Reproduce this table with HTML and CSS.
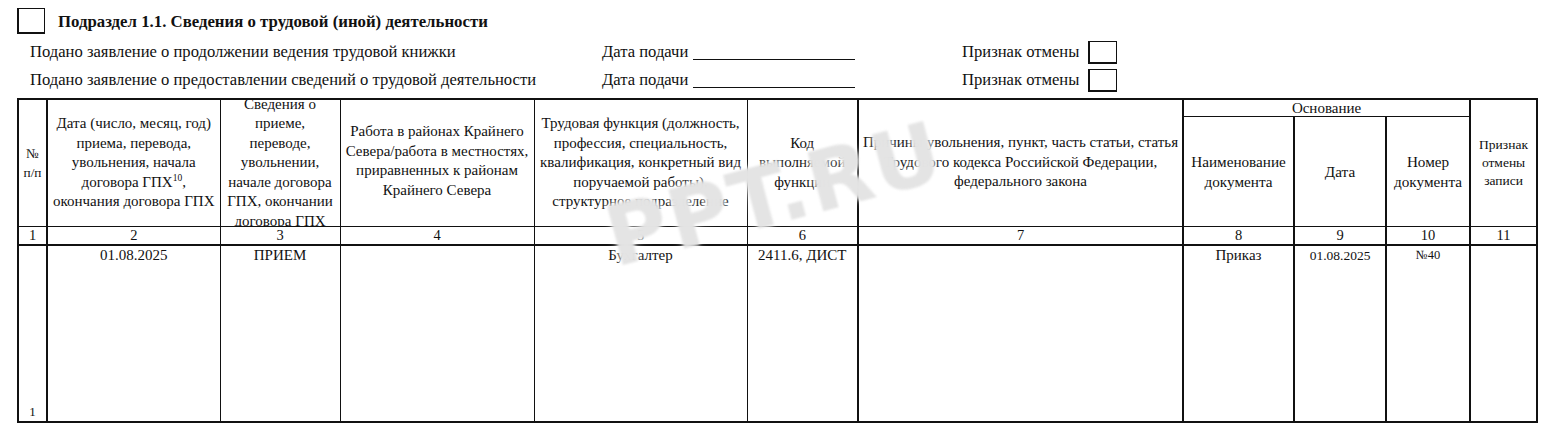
FILE: index.html
```html
<!DOCTYPE html>
<html lang="ru">
<head>
<meta charset="utf-8">
<title>Подраздел 1.1</title>
<link rel="stylesheet" href="styles.css">
</head>
<body>
<div class="page">
  <div class="title-row">
    <span class="box box-title"></span>
    <span class="title">Подраздел 1.1. Сведения о трудовой (иной) деятельности</span>
  </div>
  <div class="field-row">
    <span class="f-label">Подано заявление о продолжении ведения трудовой книжки</span>
    <span class="f-date">Дата подачи <span class="blank"></span></span>
    <span class="f-cancel">Признак отмены <span class="box box-small"></span></span>
  </div>
  <div class="field-row">
    <span class="f-label">Подано заявление о предоставлении сведений о трудовой деятельности</span>
    <span class="f-date">Дата подачи <span class="blank"></span></span>
    <span class="f-cancel">Признак отмены <span class="box box-small"></span></span>
  </div>

  <table class="grid">
    <colgroup>
      <col class="c1"><col class="c2"><col class="c3"><col class="c4"><col class="c5"><col class="c6"><col class="c7"><col class="c8"><col class="c9"><col class="c10"><col class="c11">
    </colgroup>
    <thead>
      <tr class="h1">
        <th rowspan="2" class="tl"><div class="hc small"><span>№<br>п/п</span></div></th>
        <th rowspan="2" class="tk"><div class="hc"><span>Дата (число, месяц, год) приема, перевода, увольнения, начала договора ГПХ<sup>10</sup>, окончания договора ГПХ</span></div></th>
        <th rowspan="2"><div class="hc narrow"><span>Сведения о приеме, переводе, увольнении, начале договора ГПХ, окончании договора ГПХ</span></div></th>
        <th rowspan="2"><div class="hc top"><span>Работа в районах Крайнего Севера/работа в местностях, приравненных к районам Крайнего Севера</span></div></th>
        <th rowspan="2"><div class="hc"><span>Трудовая функция (должность, профессия, специальность, квалификация, конкретный вид поручаемой работы), структурное подразделение</span></div></th>
        <th rowspan="2"><div class="hc"><span>Код<br>выполняемой<br>функции</span></div></th>
        <th rowspan="2" class="tk"><div class="hc top7"><span>Причины увольнения, пункт, часть статьи, статья Трудового кодекса Российской Федерации, федерального закона</span></div></th>
        <th colspan="3" class="tk"><div class="hsub">Основание</div></th>
        <th rowspan="2" class="tk tr"><div class="hc tiny"><span>Признак<br>отмены<br>записи</span></div></th>
      </tr>
      <tr class="h2">
        <th class="tk"><div class="hs"><span>Наименование документа</span></div></th>
        <th class="tk"><div class="hs"><span>Дата</span></div></th>
        <th class="tk"><div class="hs"><span>Номер документа</span></div></th>
      </tr>
      <tr class="nums">
        <td class="tl">1</td><td class="tk">2</td><td>3</td><td>4</td><td>5</td><td>6</td><td class="tk">7</td><td class="tk">8</td><td class="tk">9</td><td class="tk">10</td><td class="tk tr">11</td>
      </tr>
    </thead>
    <tbody>
      <tr class="data">
        <td class="tl num-bottom">1</td>
        <td class="tk">01.08.2025</td>
        <td>ПРИЕМ</td>
        <td></td>
        <td>Бухгалтер</td>
        <td>2411.6, ДИСТ</td>
        <td class="tk"></td>
        <td class="tk">Приказ</td>
        <td class="tk sm">01.08.2025</td>
        <td class="tk xs">№40</td>
        <td class="tk tr"></td>
      </tr>
    </tbody>
  </table>

  <div class="watermark">PPT.RU</div>
</div>
</body>
</html>
```

FILE: styles.css
```css
html, body {
  margin: 0;
  padding: 0;
  background: #fff;
}

body {
  font-family: "Liberation Serif", "Times New Roman", "DejaVu Serif", serif;
  color: #111;
  overflow: hidden;
}

.page {
  position: relative;
  padding-left: 17px;
  width: 1532px;
  height: 432px;
  box-sizing: border-box;
}

.title-row {
  display: flex;
  align-items: center;
  padding-top: 8px;
  height: 26px;
}

.box {
  display: inline-block;
  box-sizing: border-box;
  border: 1px solid #111;
  background: #fff;
}

.box-title {
  width: 28px;
  height: 26px;
  border-left-width: 2px;
  border-bottom-width: 2px;
}

.title {
  font-weight: bold;
  font-size: 16.8px;
  margin-left: 13px;
  padding-top: 1px;
}

.field-row {
  display: grid;
  grid-template-columns: 572px 360px auto;
  align-items: center;
  height: 28px;
  padding-left: 13px;
  font-size: 16.6px;
}

.title-row + .field-row {
  margin-top: 4px;
}

.f-date, .f-cancel {
  display: flex;
  align-items: center;
}

.blank {
  display: inline-block;
  width: 162px;
  height: 15px;
  border-bottom: 1px solid #111;
  margin-left: 5px;
}

.box-small {
  width: 29px;
  height: 23px;
  margin-left: 9px;
  border-left-width: 2px;
  border-bottom-width: 2px;
}

.grid {
  margin-top: 4px;
  border-collapse: collapse;
  table-layout: fixed;
  width: 1519px;
  font-size: 15px;
}

.c1 { width: 29px; }
.c2 { width: 173px; }
.c3 { width: 120px; }
.c4 { width: 194px; }
.c5 { width: 213px; }
.c6 { width: 111px; }
.c7 { width: 325px; }
.c8 { width: 111px; }
.c9 { width: 92px; }
.c10 { width: 84px; }
.c11 { width: 67px; }

.grid th, .grid td {
  border: 1px solid #111;
  padding: 0;
  font-weight: normal;
  text-align: center;
}

.grid .tk { border-left-width: 2px; }
.grid .tl { border-left-width: 2px; }
.grid .tr { border-right-width: 2px; }

.grid thead tr.h1 th { border-top-width: 2px; }

.hc {
  height: 126px;
  overflow: hidden;
  display: flex;
  align-items: center;
  justify-content: center;
  line-height: 19.5px;
  padding: 0 1px;
}

.hc.narrow { padding: 0 5px; }
.hc.top { align-items: flex-start; padding-top: 22px; box-sizing: border-box; }
.hc.top7 { align-items: flex-start; padding-top: 33px; box-sizing: border-box; }

.hc.small { font-size: 13.3px; line-height: 19px; padding: 0; }
.hc.tiny { font-size: 13.5px; line-height: 18px; padding: 0; }

.hc sup {
  font-size: 9.5px;
  line-height: 0;
  vertical-align: 6px;
}

.hsub {
  height: 16px;
  line-height: 16px;
  font-size: 15px;
}

.hs {
  height: 109px;
  display: flex;
  align-items: center;
  justify-content: center;
  line-height: 19.5px;
  padding: 0 4px;
  font-size: 15.2px;
}

.nums td {
  height: 17px;
  line-height: 17px;
  font-size: 14.5px;
  border-bottom-width: 2px;
}

.data td {
  height: 174px;
  vertical-align: top;
  padding-top: 1px;
  font-size: 15px;
  line-height: 17px;
  border-bottom-width: 2px;
}

.data td.sm { font-size: 13.5px; }
.data td.xs { font-size: 12.5px; }

.data td.num-bottom {
  vertical-align: bottom;
  padding-top: 0;
  padding-bottom: 1px;
  font-size: 13px;
}

.watermark {
  position: absolute;
  left: 608px;
  top: 190px;
  font-family: "DejaVu Sans", "Liberation Sans", sans-serif;
  font-weight: bold;
  font-size: 84px;
  letter-spacing: 2px;
  color: rgba(218, 218, 218, 0.72);
  text-shadow: 0 0 3px rgba(255,255,255,0.9), 0 0 8px rgba(255,255,255,0.8);
  transform: rotate(-15deg);
  transform-origin: left center;
  pointer-events: none;
  filter: blur(1px);
}
```
